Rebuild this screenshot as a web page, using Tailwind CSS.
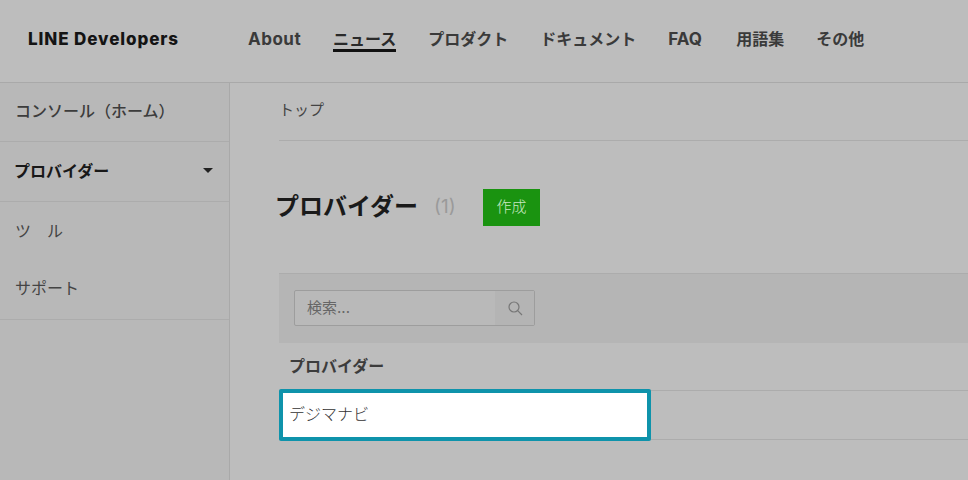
<!DOCTYPE html>
<html lang="ja">
<head>
    <meta charset="UTF-8">
    <title>LINE Developers</title>
    <script src="https://cdn.jsdelivr.net/npm/@tailwindcss/browser@4"></script>
</head>
<body class="w-[968px] h-[480px] overflow-hidden bg-[#bdbdbd] text-[#333] font-['Inter','Noto_Sans_CJK_JP',sans-serif]">
  <header class="h-[83px] border-b border-[#a9a9a9] flex items-center pb-[4px]">
    <div class="w-[248px] pl-[28px] pt-[2px] text-[17px] font-extrabold text-[#141414] tracking-[0.9px]">LINE Developers</div>
    <nav class="flex items-center gap-[32px] text-[16px] font-bold text-[#3a3a3a]">
      <a class="w-[53px] mt-[2px] text-[17px] tracking-[0.5px]">About</a>
      <a class="relative text-[#2a2a2a]">ニュース<span class="absolute left-0 right-0 top-[22px] h-[3px] bg-[#111]"></span></a>
      <a>プロダクト</a>
      <a>ドキュメント</a>
      <a class="w-[36px] mt-[2px] text-[17px]">FAQ</a>
      <a>用語集</a>
      <a>その他</a>
    </nav>
  </header>

  <div class="flex h-[397px]">
    <aside class="w-[230px] shrink-0 border-r border-[#a9a9a9] bg-[#b8b8b8]">
      <div class="h-[59px] flex items-center pl-[15px] pb-[2px] text-[16px] font-medium text-[#3c3c3c] border-b border-[#acacac]">コンソール（ホーム）</div>
      <div class="h-[60px] flex items-center justify-between pl-[14px] pr-[16px] pb-[2px] text-[16px] font-bold text-[#181818] border-b border-[#acacac]">
        プロバイダー
        <span class="w-0 h-0 border-x-[5px] border-x-transparent border-t-[5px] border-t-[#222]"></span>
      </div>
      <div class="h-[59px] flex items-center pl-[15px] pb-[2px] text-[16px] text-[#444]">ツ<span class="text-transparent">ー</span>ル</div>
      <div class="h-[59px] flex items-center pl-[15px] pb-[4px] text-[16px] text-[#444] border-b border-[#acacac]">サポート</div>
    </aside>

    <main class="flex-1 pl-[49px]">
      <div class="h-[58px] flex items-center border-b border-[#acacac] text-[15px] text-[#444] pb-[2px]">トップ</div>

      <div class="flex items-center mt-[48px] h-[37px]">
        <h1 class="ml-[-4px] pb-[2px] text-[24px] font-bold text-[#1a1a1a]">プロバイダー</h1>
        <span class="ml-[16px] w-[24px] text-[19px] text-[#9a9a9a]">(1)</span>
        <button class="ml-[25px] w-[57px] h-[37px] bg-[#1a9310] text-[15px] font-light text-[#c9e8c2]">作成</button>
      </div>

      <div class="mt-[47px] h-[70px] bg-[#b5b5b5] border-t border-[#acacac] pl-[15px] pt-[16px]">
        <div class="w-[241px] h-[36px] flex border border-[#9d9d9d] rounded-[2px] bg-[#b9b9b9]">
          <div class="flex-1 flex items-center pl-[12px] text-[15px] text-[#666]">検索...</div>
          <div class="w-[39px] flex items-center justify-center bg-[#b4b4b4]">
            <svg width="16" height="16" viewBox="0 0 16 16" fill="none" stroke="#777" stroke-width="1.2"><circle cx="7" cy="7" r="5"/><path d="M10.7 10.7L15 15"/></svg>
          </div>
        </div>
      </div>

      <div class="h-[48px] flex items-center pl-[10px] pb-[2px] text-[16px] font-bold text-[#3c3c3c] border-b border-[#acacac]">プロバイダー</div>
      <div class="relative h-[49px] border-b border-[#acacac]">
        <div class="absolute left-0 top-[-2px] w-[372px] h-[52px] bg-white border-[4px] border-[#0e93ab] rounded-[2px] flex items-center pl-[6px] pb-[3px] text-[16px] font-light text-[#333]">デジマナビ</div>
      </div>
    </main>
  </div>
</body>
</html>
